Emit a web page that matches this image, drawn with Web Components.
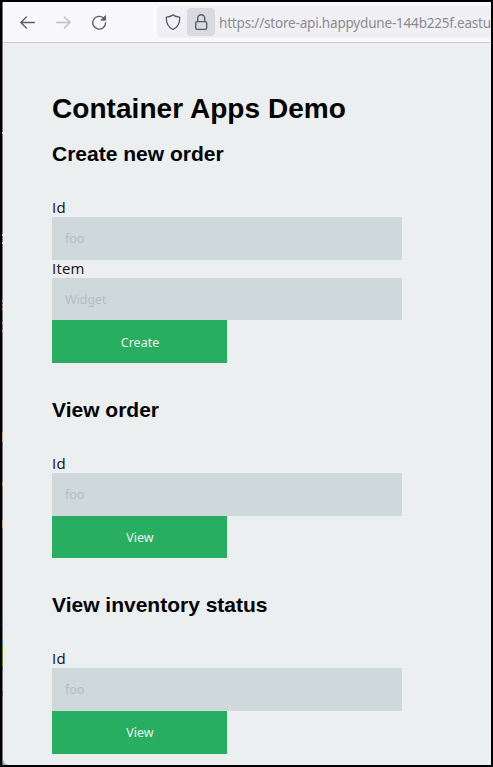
<!DOCTYPE html>
<html lang="en"><head><meta charset="utf-8"><title>Container Apps Demo</title>
<style>html,body{margin:0;height:100%;overflow:hidden;background:#000}</style></head>
<body><browser-window></browser-window>
<script>
const define=(name,html)=>customElements.define(name,class extends HTMLElement{
  constructor(){super();const t=document.createElement('template');t.innerHTML=html;
    this.attachShadow({mode:'open'}).append(t.content.cloneNode(true));}
});
define('nav-icon',`<style>:host{display:block;width:16px;height:16px}::slotted(svg){display:block;width:16px;height:16px;fill:none;stroke:currentColor;stroke-width:1.35;stroke-linecap:round;stroke-linejoin:round}</style><slot></slot>`);
define('address-bar',`<style>
:host{display:flex;align-items:center;box-sizing:border-box;height:32px;flex:1;min-width:0;background:#f0f0f4;border-radius:4px 0 0 4px;overflow:hidden;color:#5b5b66}
.shield{margin:0 6px 0 8px}
.lock{display:flex;align-items:center;justify-content:center;width:28px;height:28px;border-radius:4px;background:#d9dae0;flex:none}
.shield{flex:none}
.url{margin-left:4px;padding-top:2px;font:13.5px/20px "Noto Sans",sans-serif;letter-spacing:-.19px;color:#8b8b92;white-space:nowrap}
</style>
<nav-icon class="shield"><svg viewBox="0 0 16 16"><path d="M8 .9C6.1 2.3 3.8 3 1.4 3.1C.9 8.9 3 13 8 15.5C13 13 15.1 8.9 14.6 3.1C12.2 3 9.900 2.3 8 .9Z"/></svg></nav-icon>
<div class="lock"><nav-icon><svg viewBox="0 0 16 16"><rect x="2.7" y="7.600" width="11" height="7.700" rx="1.500"/><path d="M4.700 7.500V4.200a3.500 3.500 0 0 1 7 0v3.300"/></svg></nav-icon></div>
<span class="url"><slot></slot></span>`);
define('browser-toolbar',`<style>
:host{display:flex;align-items:center;height:40px;background:#f9f9fb;border-bottom:1px solid #cccccf;box-sizing:content-box;color:#5b5b66;padding-left:16px}
nav-icon{margin-right:20px;flex:none}.off{color:#bdbdc3}address-bar{margin-left:30px}
</style>
<nav-icon><svg viewBox="0 0 16 16"><path d="M15.300 8.500H1.800M7.400 3L1.800 8.500L7.400 14"/></svg></nav-icon>
<nav-icon class="off"><svg viewBox="0 0 16 16"><path d="M1.500 8.500H15M9.400 3L15 8.500L9.400 14"/></svg></nav-icon>
<nav-icon><svg viewBox="0 0 16 16"><path d="M14.600 8.700A6.400 6.400 0 1 1 12.500 4"/><path d="M14.600 1.800V6.200H10.200Z" fill="currentColor" stroke-width=".8"/></svg></nav-icon>
<address-bar>https://store-api.happydune-144b225f.eastu</address-bar>`);
define('form-field',`<style>
:host{display:block;width:350px}
label{display:block;height:18px;font:15px/16px "Open Sans","Noto Sans",sans-serif;letter-spacing:.2px;color:#111}
.box{box-sizing:border-box;height:var(--h,43px);padding:0 13px;background:#cfd8db;color:#b0bfc4;font:12.5px/43px "Noto Sans",sans-serif;letter-spacing:-.1px}
</style><label><slot name="label"></slot></label><div class="box"><slot></slot></div>`);
define('action-button',`<style>
:host{display:block}button{display:block;border:0;padding:var(--pt,0) 0 0 1px;box-sizing:border-box;width:175px;height:var(--h,43px);background:#27ae60;color:#ecf0f1;font:12.5px/43px "Noto Sans",sans-serif}
</style><button type="button"><slot></slot></button>`);
define('form-section',`<style>
:host{display:block;margin-bottom:35px}h2{margin:0 0 33px;font:bold 21px/24px "Liberation Sans",Arial,sans-serif;color:#000}
</style><h2><slot name="title"></slot></h2><slot></slot>`);
define('demo-page',`<style>
:host{display:block;flex:1;background:#ebeff0;padding:50px 0 0 49px;overflow:hidden;border-bottom-left-radius:6px}
h1{margin:0 0 17px;font:bold 28px/32px "Liberation Sans",Arial,sans-serif;letter-spacing:.05px;color:#000}
.short{--h:42px}
</style>
<h1>Container Apps Demo</h1>
<form-section><span slot="title">Create new order</span>
<form-field><span slot="label">Id</span>foo</form-field>
<form-field class="short"><span slot="label">Item</span>Widget</form-field>
<action-button style="--pt:1px">Create</action-button></form-section>
<form-section><span slot="title">View order</span>
<form-field><span slot="label">Id</span>foo</form-field>
<action-button class="short">View</action-button></form-section>
<form-section><span slot="title">View inventory status</span>
<form-field><span slot="label">Id</span>foo</form-field>
<action-button>View</action-button></form-section>`);
define('browser-window',`<style>
:host{display:flex;box-sizing:border-box;width:493px;height:767px;border:2px solid #000;overflow:hidden;background:#a9abac}
.edge{width:1px;flex:none;background:linear-gradient(#0000 130px,#ddd 0 132px,#0000 0 232px,#ddd 0 234px,#0000 0 240px,#ddd 0 242px,#0000 0 298px,#c5a46c 0 300px,#0000 0 302px,#c5a46c 0 304px,#0000 0 306px,#c5a46c 0 308px,#0000 0 320px,#c5a46c 0 322px,#0000 0 328px,#c5a46c 0 330px,#0000 0 430px,#c5a46c 0 440px,#0000 0 480px,#c5a46c 0 484px,#0000 0 518px,#c5a46c 0 526px,#0000 0 621px,#2b82b8 0 624px,#0000 0 638px,#2b82b8 0 643px,#5f9820 0 665px,#556 0 669px,#0000 0 689px,#555 0 694px,#0000 0),#76777a}
main{display:flex;flex-direction:column;flex:1;min-width:0}
</style><div class="edge"></div><main><browser-toolbar></browser-toolbar><demo-page></demo-page></main>`);
</script></body></html>
